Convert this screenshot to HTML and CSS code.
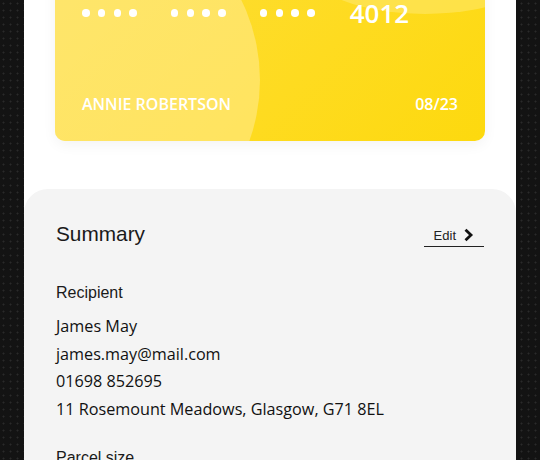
FILE: index.html
```html
<!DOCTYPE html>
<html>
<head>
<meta charset="utf-8">
<link rel="stylesheet" href="styles.css">
</head>
<body>
<div class="screen">
  <div class="card">
    <div class="circle circle-left"></div>
    <div class="circle circle-right"></div>
    <div class="card-number">
      <span class="group"><i></i><i></i><i></i><i></i></span>
      <span class="group"><i></i><i></i><i></i><i></i></span>
      <span class="group"><i></i><i></i><i></i><i></i></span>
      <span class="last">4012</span>
    </div>
    <div class="card-bottom">
      <span>ANNIE ROBERTSON</span>
      <span>08/23</span>
    </div>
  </div>
  <section class="summary">
    <div class="summary-head">
      <h2>Summary</h2>
      <a class="edit">Edit
        <svg width="11" height="14" viewBox="0 0 11 14"><path d="M2.5 1.8 L8 7 L2.5 12.2" fill="none" stroke="#111" stroke-width="2.8" stroke-linejoin="miter"/></svg>
      </a>
    </div>
    <h3>Recipient</h3>
    <ul class="details">
      <li>James May</li>
      <li>james.may@mail.com</li>
      <li>01698 852695</li>
      <li>11 Rosemount Meadows, Glasgow, G71 8EL</li>
    </ul>
    <h3 class="parcel">Parcel size</h3>
  </section>
</div>
</body>
</html>
```
FILE: styles.css
```css
html, body {
  margin: 0;
  padding: 0;
}
body {
  background-color: #131313;
  background-image: radial-gradient(circle, #2a2a2a 0.8px, transparent 1.2px);
  background-size: 7px 7px;
  height: 460px;
  overflow: hidden;
}
.screen {
  width: 492px;
  margin: 0 24px;
  height: 460px;
  background: #fff;
  overflow: hidden;
}
.card {
  position: relative;
  margin: -50px 31px 0 31px;
  height: 191px;
  border-radius: 10px;
  background: linear-gradient(135deg, #fdde3a 0%, #fedb20 60%, #fdd90e 100%);
  overflow: hidden;
  box-shadow: 0 4px 14px rgba(0,0,0,0.05);
  font-family: "Open Sans", sans-serif;
  color: #fff;
  display: flex;
  flex-direction: column;
  justify-content: flex-end;
  padding: 0 27px 0 27px;
}
.circle {
  position: absolute;
  border-radius: 50%;
}
.circle-left {
  width: 360px;
  height: 360px;
  left: -155px;
  top: -50px;
  background: rgba(255, 235, 150, 0.55);
}
.circle-right {
  width: 260px;
  height: 120px;
  right: -70px;
  top: -56px;
  background: rgba(255, 240, 160, 0.35);
}
.card-number {
  position: relative;
  display: flex;
  align-items: center;
  height: 26px;
  margin-bottom: 67px;
}
.group {
  display: flex;
  gap: 8.3px;
  margin-right: 34px;
}
.group:nth-child(3) {
  margin-right: 35px;
}
.group i {
  width: 7.5px;
  height: 7.5px;
  border-radius: 50%;
  background: #fff;
  display: block;
}
.last {
  font-size: 26px;
  font-weight: 600;
}
.card-bottom {
  position: relative;
  display: flex;
  justify-content: space-between;
  font-size: 16px;
  font-weight: 600;
  height: 22px;
  line-height: 22px;
  margin-bottom: 26px;
}
.summary {
  margin-top: 48px;
  background: #f4f4f4;
  border-radius: 24px 24px 0 0;
  padding: 31px 32px 0 32px;
  height: 300px;
}
.summary-head {
  display: flex;
  justify-content: space-between;
  align-items: center;
}
h2 {
  margin: 0;
  font-family: "Liberation Sans", Arial, sans-serif;
  font-weight: 400;
  font-size: 20.8px;
  color: #1a1a1a;
  line-height: 28px;
}
.edit {
  font-family: "Liberation Sans", Arial, sans-serif;
  font-size: 13px;
  color: #222;
  border-bottom: 1.5px solid #222;
  padding: 0 10px 3px 10px;
  display: flex;
  align-items: center;
  gap: 7px;
  margin-top: 6px;
}
h3 {
  margin: 35px 0 0 0;
  font-family: "Liberation Sans", Arial, sans-serif;
  font-weight: 400;
  font-size: 16px;
  line-height: 20px;
  color: #1a1a1a;
}
.details {
  list-style: none;
  margin: 10px 0 0 0;
  padding: 0;
  font-family: "Open Sans", sans-serif;
  font-size: 16.2px;
  font-weight: 500;
  color: #111;
}
.details li {
  line-height: 27.5px;
}
h3.parcel {
  margin-top: 25px;
}
```
